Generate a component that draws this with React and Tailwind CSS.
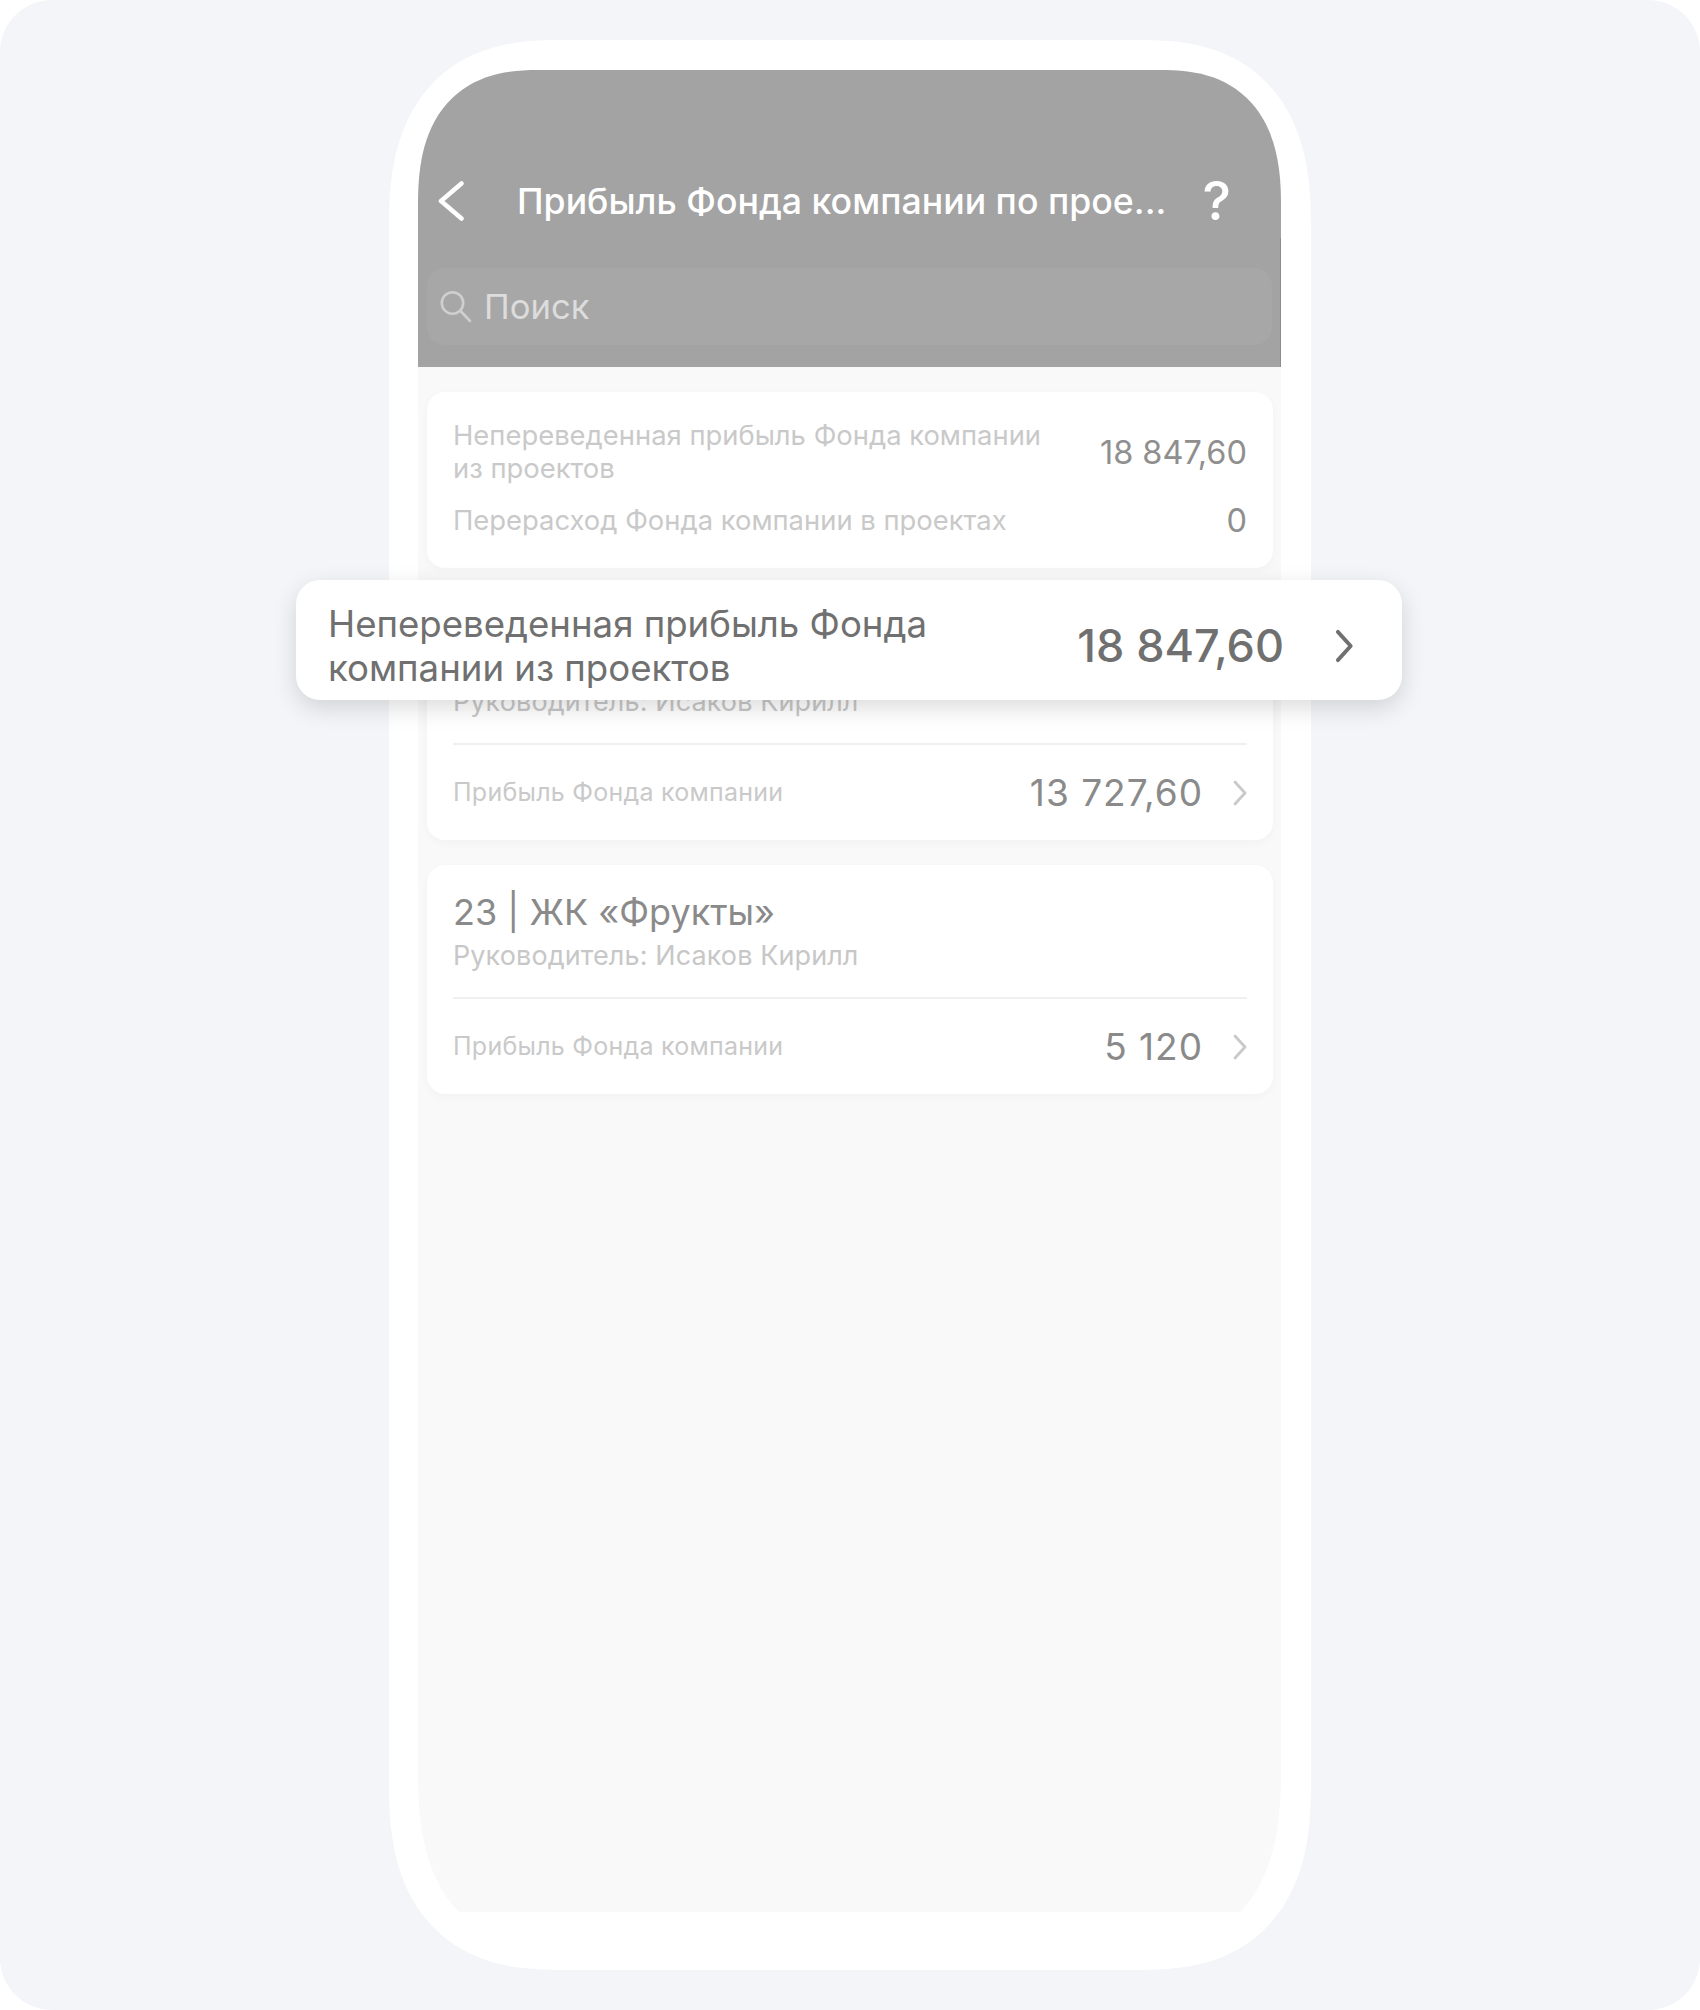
const Chev = ({ className, sw = 2.8 }) => (
  <svg viewBox="0 0 16 28" fill="none" className={className} stroke="currentColor" strokeWidth={sw} strokeLinecap="round" strokeLinejoin="round">
    <path d="M4 3l10 11L4 25" />
  </svg>
);

const Card = ({ tall, title, value }) => (
  <div className={`bg-white rounded-[18px] shadow-[0_3px_10px_rgba(0,0,0,0.03)] pl-[26px] pr-[26px] ${tall ? "pt-[43px]" : "pt-[25px]"}`}>
    <div className="h-[44px] text-[36px] leading-[44px] text-[#8a8a8a]">{title}</div>
    <div className="mt-[6px] text-[27px] tracking-[0.1px] leading-[32px] text-[#c7c7c7]">Руководитель: Исаков Кирилл</div>
    <div className="h-[2px] bg-[#f0f0f0] mt-[25px]" />
    <div className="flex items-center justify-between h-[95px]">
      <span className="text-[25px] tracking-[0.25px] text-[#c9c9c9]">Прибыль Фонда компании</span>
      <span className="flex items-center">
        <span className="text-[37px] tracking-[1px] text-[#8a8a8a] mr-[28px]">{value}</span>
        <Chev className="w-[16px] h-[28px] text-[#c9c9c9]" />
      </span>
    </div>
  </div>
);

export default function App() {
  return (
    <div className="w-[1700px] h-[2010px] bg-white font-['Inter','Noto_Sans',sans-serif]">
      <div className="relative w-full h-full bg-[#f3f5f9] rounded-[52px] pt-[40px] pl-[389px]">
        <div className="w-[922px] h-[1930px] bg-white rounded-[170px/185px] [corner-shape:superellipse(1.3)] pt-[30px] pl-[29px]">
          <div className="w-[863px] h-[1842px] overflow-hidden">
            <div className="w-[863px] h-[1870px] bg-[#f9f9f9] rounded-[120px_120px_120px_120px/135px_135px_170px_170px] [corner-shape:superellipse(1.3)] overflow-hidden">
              <div className="relative h-[297px] bg-[#a3a3a3] pt-[111px]">
                <div className="h-[40px] flex items-center pl-[20px] pr-[50px]">
                  <svg viewBox="0 0 26 40" className="w-[26px] h-[40px] text-white" fill="none" stroke="currentColor" strokeWidth="4.5" strokeLinecap="round" strokeLinejoin="round"><path d="M23.5 2.5L3 20l20.5 17.5" /></svg>
                  <div className="ml-[53px] flex-1 text-[35.7px] leading-[40px] font-medium text-white">Прибыль Фонда компании по прое...</div>
                  <div className="text-[54px] font-medium text-white leading-[40px]">?</div>
                </div>
                <div className="mt-[47px] mx-[9px] h-[77px] rounded-[18px] bg-[#a7a7a7] flex items-center pl-[13px]">
                  <svg viewBox="0 0 32 32" className="w-[32px] h-[32px] text-[#cfcfcf]" fill="none" stroke="currentColor" strokeWidth="2.6" strokeLinecap="round"><circle cx="12.5" cy="12" r="10.7" /><path d="M20.5 20l9.5 10" /></svg>
                  <span className="ml-[12px] text-[34.6px] text-[#dcdcdc]">Поиск</span>
                </div>
                <div className="absolute right-0 top-[168px] bottom-0 w-px bg-[#8c8c8c]" />
              </div>
              <div className="pl-[9px] pr-[8px] pt-[25px] flex flex-col gap-[25px]">
                <div className="bg-white rounded-[18px] shadow-[0_3px_10px_rgba(0,0,0,0.03)] pl-[26px] pr-[26px] h-[176px] pt-[27px]">
                  <div className="flex items-center justify-between">
                    <div className="text-[27.4px] leading-[33px] text-[#c9c9c9] w-[600px]">Непереведенная прибыль Фонда компании из проектов</div>
                    <div className="text-[32.5px] leading-[33px] text-[#8f8f8f]">18 847,60</div>
                  </div>
                  <div className="flex items-center justify-between mt-[19px]">
                    <div className="text-[27.4px] leading-[33px] text-[#c9c9c9]">Перерасход Фонда компании в проектах</div>
                    <div className="text-[32.5px] leading-[33px] text-[#8f8f8f]">0</div>
                  </div>
                </div>
                <Card tall title="" value="13 727,60" />
                <Card title="23 | ЖК «Фрукты»" value="5 120" />
              </div>
            </div>
          </div>
        </div>
        <div className="absolute left-[296px] top-[580px] w-[1106px] h-[120px] bg-white rounded-[24px] shadow-[0_8px_24px_rgba(0,0,0,0.14)] flex items-center pl-[32px] pr-[48px] pt-[11px]">
          <div className="w-[640px] text-[36.6px] leading-[44px] text-[#707070]">Непереведенная прибыль Фонда компании из проектов</div>
          <div className="flex-1 text-right text-[45px] font-medium text-[#707070]">18 847,60</div>
          <Chev sw={3} className="ml-[48px] w-[22px] h-[36px] text-[#707070]" />
        </div>
      </div>
    </div>
  );
}
